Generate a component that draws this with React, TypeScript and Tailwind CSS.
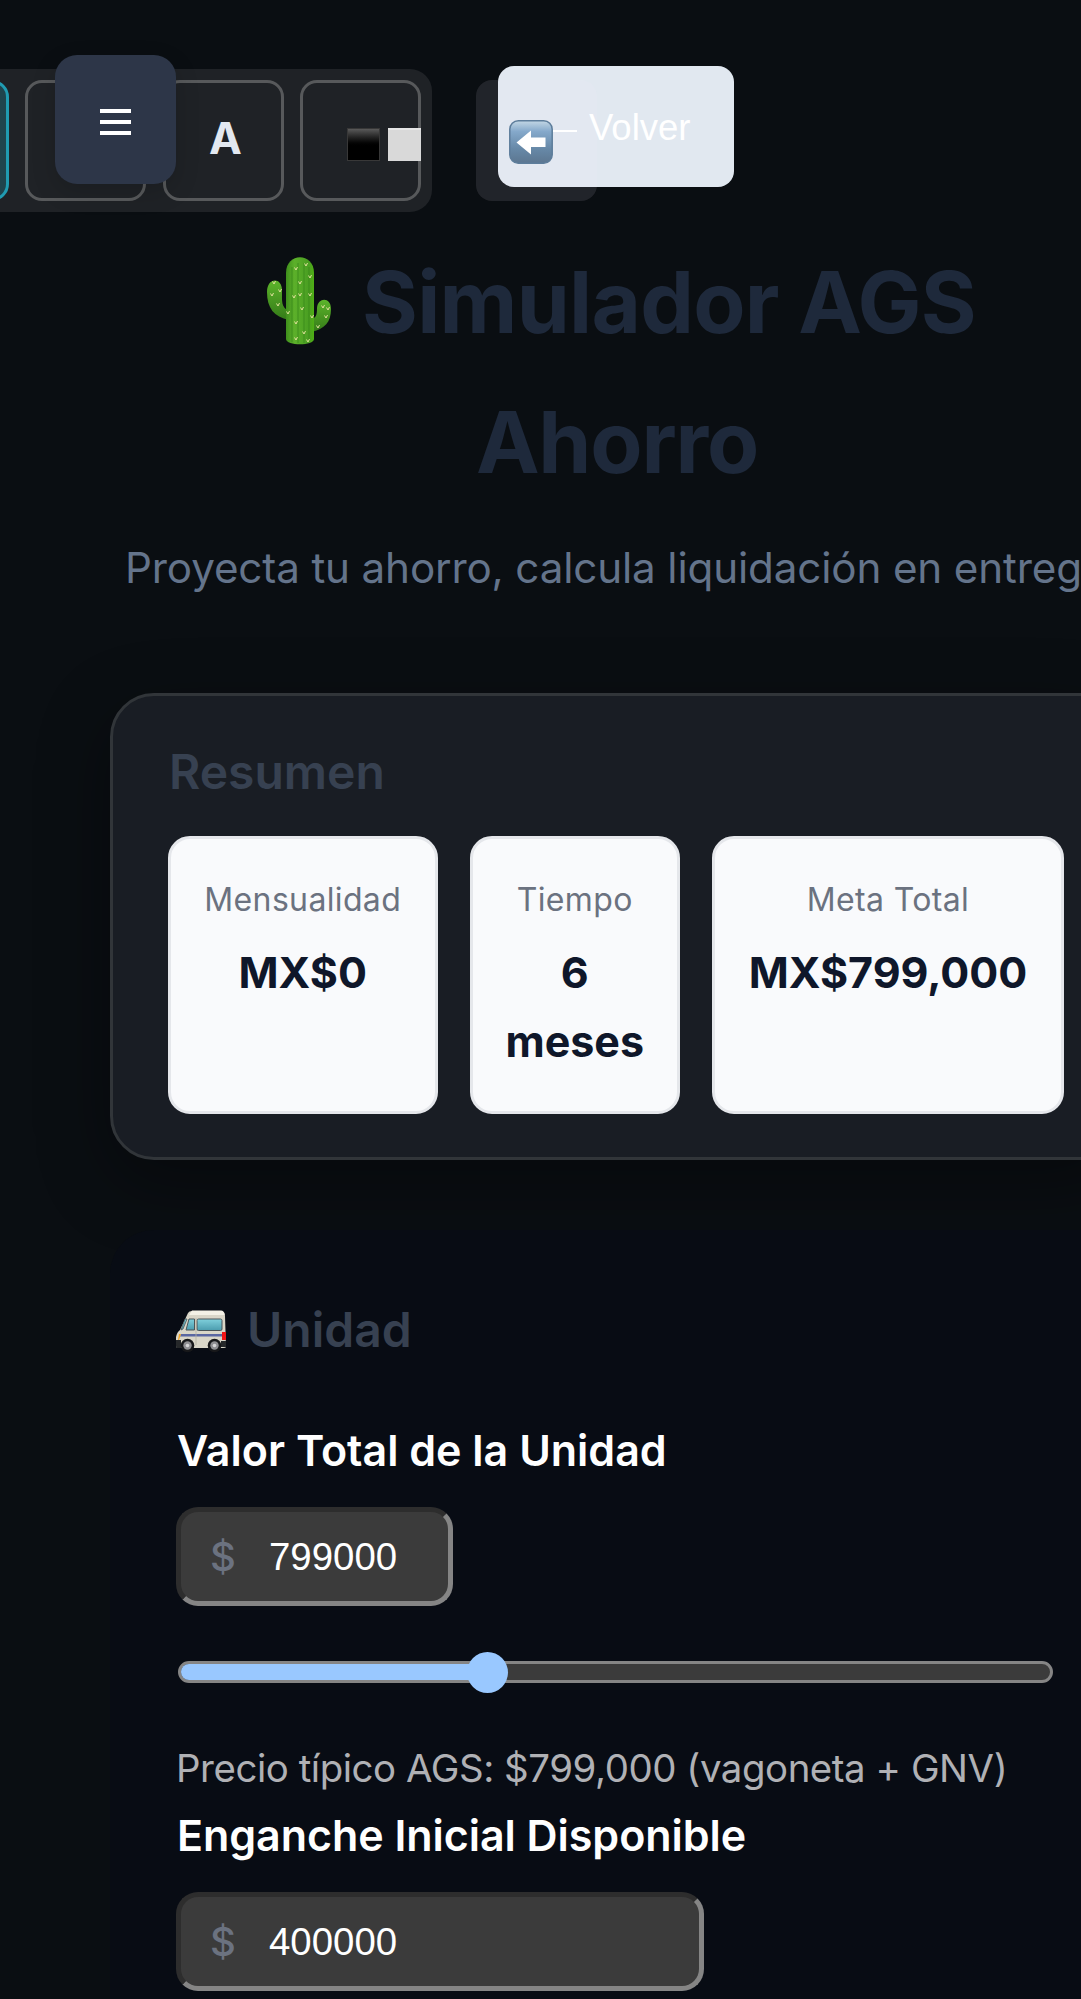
import React from "react";

function Cactus() {
  const spines = [
    [30, 12], [40, 8], [44, 20], [34, 26], [28, 40], [44, 38], [36, 52], [46, 60], [30, 66], [38, 76],
    [8, 26], [14, 34], [6, 38], [12, 48], [22, 56], [57, 50], [60, 60], [52, 70], [62, 52], [30, 82], [42, 84], [34, 38],
  ];
  return (
    <svg className="mb-[3px] h-[88px] w-[66px]" viewBox="0 0 66 88">
      <defs>
        <linearGradient id="stem" x1="0" x2="1">
          <stop offset="0" stopColor="#3f8f1c" />
          <stop offset=".3" stopColor="#5cb02a" />
          <stop offset=".8" stopColor="#4a9f22" />
          <stop offset="1" stopColor="#4fae14" />
        </linearGradient>
        <linearGradient id="arm" x1="0" x2="0" y1="0" y2="1">
          <stop offset="0" stopColor="#5cb42a" />
          <stop offset="1" stopColor="#347a18" />
        </linearGradient>
      </defs>
      <path d="M1 35C1 20 16 20 16 33C16 45 15 50 23 54V63C8 60 1 51 1 35Z" fill="url(#arm)" />
      <path d="M65 52C65 40 52 40 51 51C51 59 50 60 45 63V75C59 72 65 65 65 52Z" fill="url(#arm)" />
      <path d="M20 16C20-5 48-5 48 16V82C48 89 20 89 20 82Z" fill="url(#stem)" />
      <path d="M26 10V85M32 6V86M38 6V86M43 10V85" stroke="#37851b" strokeWidth="1.2" opacity=".6" fill="none" />
      {spines.map(([x, y], i) => (
        <path key={i} d={`M${x - 1.5} ${y - 1.5}l1.500 2.500 1.500-3`} stroke="#dfe09a" strokeWidth="1" fill="none" />
      ))}
    </svg>
  );
}

function Van() {
  return (
    <svg className="mt-[4px] h-[44px] w-[50px] shrink-0" viewBox="0 0 50 44">
      <defs>
        <linearGradient id="glass" x1="0" x2="0" y1="0" y2="1">
          <stop offset="0" stopColor="#7fd0dc" />
          <stop offset="1" stopColor="#4b9cae" />
        </linearGradient>
      </defs>
      <path d="M12 3Q13 1 16 1H45Q49 1 49 6L50 37Q50 38 47 38H3Q0 38 0 36V27Q1 22 4 20Z" fill="#d9d6c8" />
      <path d="M16 .5H45Q48 .5 48.500 5H13Z" fill="#f3f1e6" />
      <path d="M9 9L5 20L7 19L11 9Z" fill="url(#glass)" stroke="#4b5558" strokeWidth=".8" />
      <path d="M13 9H18.500V20H10Z" fill="url(#glass)" stroke="#4b5558" strokeWidth="1" />
      <rect x="21" y="9" width="25" height="11.500" rx="1.500" fill="url(#glass)" stroke="#4b5558" strokeWidth="1" />
      <path d="M5 24H46V26.500H4Z" fill="#5a67a2" />
      <path d="M20 8V35" stroke="#b4b1a2" strokeWidth=".8" />
      <path d="M3 24h2l-2 6H2Z" fill="#f5a623" />
      <rect x="46" y="22" width="4" height="8" fill="#f01414" />
      <path d="M0 30H5V38H1Q0 38 0 36ZM45 31H50V37H45Z" fill="#25282a" />
      {[11.500, 38.500].map((cx) => (
        <g key={cx}>
          <circle cx={cx} cy="35.500" r="6.800" fill="#17181a" />
          <circle cx={cx} cy="35.500" r="4.200" fill="#8f8f92" />
          <circle cx={cx} cy="35.500" r="1.800" fill="#d5d5d6" />
        </g>
      ))}
    </svg>
  );
}

function BackArrow() {
  return (
    <svg className="h-[44px] w-[44px]" viewBox="0 0 44 44">
      <defs>
        <linearGradient id="key" x1="0" x2="0" y1="0" y2="1">
          <stop offset="0" stopColor="#c3d7e5" />
          <stop offset=".25" stopColor="#85a9cb" />
          <stop offset=".65" stopColor="#6789a8" />
          <stop offset="1" stopColor="#5c7690" />
        </linearGradient>
      </defs>
      <rect x=".8" y=".8" width="42.400" height="42.400" rx="8.500" fill="url(#key)" stroke="#5d7d9b" strokeWidth="1.500" />
      <path d="M7.500 22.500L22 10.500V17.500H36.500V27H22V34.500Z" fill="#fff" />
    </svg>
  );
}

const tool = "h-[121px] w-[121px] shrink-0 rounded-[17px] border-[3px] border-[#57595b]";

function TopBar() {
  return (
    <div className="relative h-[212px] font-['Liberation_Sans',sans-serif]">
      <div className="absolute top-[69px] right-[649px] flex h-[143px] w-[560px] items-center justify-end gap-[16.500px] rounded-[22px] bg-[#1f2226] pr-[11px]">
        <div className="h-[121px] w-[121px] shrink-0 rounded-[17px] border-[3px] border-[#209bb1] bg-[#1f444d]" />
        <div className={tool} />
        <div className={`${tool} flex items-center justify-center pb-[5px] pl-[5px] font-['Inter',sans-serif] text-[44px] font-bold text-[#e2e8f0]`}>
          A
        </div>
        <div className={`${tool} relative`}>
          <div className="absolute top-[45px] left-[44px] flex gap-[8px]">
            <div className="h-[33px] w-[33px] border border-[#383838] bg-linear-to-b from-[#5a5a5a] via-black via-60% to-black" />
            <div className="h-[33px] w-[33px] border-t-2 border-[#e5e5e5] bg-[#d9d9d9]" />
          </div>
        </div>
      </div>
      <div className="absolute top-[55px] left-[55px] flex h-[129px] w-[121px] flex-col items-center gap-[7px] rounded-[22px] bg-[#2d3648] pt-[54px] shadow-[0_8px_24px_rgba(0,0,0,0.15)]">
        <div className="h-[4px] w-[31px] bg-white" />
        <div className="h-[4px] w-[31px] bg-white" />
        <div className="h-[4px] w-[31px] bg-white" />
      </div>
      <div className="absolute top-[66px] left-[498px] h-[121px] w-[236px] rounded-[16px] bg-[#e1e8f0]" />
      <div className="absolute top-[80px] left-[476px] h-[121px] w-[121px] rounded-[16px] bg-[#f5edff]/10" />
      <div className="absolute top-[130px] left-[550px] h-[2px] w-[27px] bg-white" />
      <div className="absolute top-[107px] left-[589px] text-[36.500px] leading-[42px] text-white">Volver</div>
      <div className="absolute top-[120px] left-[509px]">
        <BackArrow />
      </div>
    </div>
  );
}

function Stat({ label, width, children }: { label: string; width: string; children: React.ReactNode }) {
  return (
    <div className={`${width} h-[278px] shrink-0 rounded-[22px] border-[3px] border-[#e5e7eb] bg-[#f9fafc] pt-[33px] text-center whitespace-nowrap`}>
      <div className="text-[32px] leading-[56px] tracking-[0.35px] text-[#6b7280]">{label}</div>
      <div className="mt-[10px] text-[43px] leading-[69px] font-bold text-[#0f172a]">{children}</div>
    </div>
  );
}

function MoneyInput({ value, width }: { value: string; width: string }) {
  return (
    <div className={`${width} flex h-[99px] items-center rounded-[22px] border-[5px] border-t-[#2d2d2d] border-r-[#858585] border-b-[#858585] border-l-[#2d2d2d] bg-[#3b3b3b]`}>
      <span className="ml-[29px] w-[59px] text-[40px] leading-[60px] font-medium text-[#6b7280]">$</span>
      <span className="font-['Liberation_Sans',sans-serif] text-[38.400px] leading-[60px] text-white">{value}</span>
    </div>
  );
}

export default function App() {
  return (
    <div className="h-[1999px] w-[1081px] overflow-hidden bg-[#0a0e12] font-['Inter',sans-serif]">
      <TopBar />
      <header className="w-[1234px] text-center">
        <h1 className="pt-[20px] text-[85.300px] leading-[140px] font-bold text-[#1e293b]">
          <span className="flex h-[140px] items-center justify-center gap-[30px] pl-[8px] tracking-[-0.75px]">
            <Cactus />
            <span className="whitespace-nowrap">Simulador AGS</span>
          </span>
          <span className="block tracking-[-1.2px]">Ahorro</span>
        </h1>
        <p className="mt-[21px] ml-[125px] text-left text-[42.200px] leading-[70px] tracking-[-0.15px] whitespace-nowrap text-[#64748b]">
          Proyecta tu ahorro, calcula liquidación en entrega
        </p>
      </header>
      <section className="mt-[90px] ml-[110px] h-[467px] w-[1014px] rounded-[44px] border-[3px] border-[#313539] bg-[#191d24] px-[55px] pt-[38px] shadow-[0_22px_70px_rgba(0,0,0,0.35)]">
        <h2 className="pl-[1px] text-[48px] leading-[76px] font-semibold text-[#374151]">Resumen</h2>
        <div className="mt-[26px] flex gap-[32.500px]">
          <Stat label="Mensualidad" width="w-[269.500px]">MX$0</Stat>
          <Stat label="Tiempo" width="w-[209.500px]">6<br />meses</Stat>
          <Stat label="Meta Total" width="w-[352px]">MX$799,000</Stat>
        </div>
      </section>
      <section className="mt-[70px] ml-[110px] h-[850px] rounded-tl-[44px] bg-[#080c14] pt-[60px] pl-[66px] whitespace-nowrap">
        <h2 className="flex h-[80px] items-center gap-[21px] text-[48px] font-semibold text-[#374151]">
          <Van />
          <span>Unidad</span>
        </h2>
        <label className="mt-[45px] ml-[1px] block text-[43px] leading-[70px] font-semibold text-white">Valor Total de la Unidad</label>
        <div className="mt-[22px]">
          <MoneyInput value="799000" width="w-[277px]" />
        </div>
        <div className="relative mt-[55px] ml-[2px] h-[22px] w-[875px] rounded-full border-[3px] border-[#858585] bg-[#3b3b3b]">
          <div className="h-full w-[310px] rounded-l-full bg-[#99c8ff]" />
          <div className="absolute top-[-12.500px] left-[286px] h-[41px] w-[41px] rounded-full bg-[#99c8ff]" />
        </div>
        <p className="mt-[54px] text-[38.400px] leading-[62px] tracking-[-0.44px] text-[#b0b1b5]">Precio típico AGS: $799,000 (vagoneta + GNV)</p>
        <label className="mt-[1px] ml-[1px] block text-[43px] leading-[70px] font-semibold tracking-[-0.05px] text-white">Enganche Inicial Disponible</label>
        <div className="mt-[22px]">
          <MoneyInput value="400000" width="w-[528px]" />
        </div>
      </section>
    </div>
  );
}
